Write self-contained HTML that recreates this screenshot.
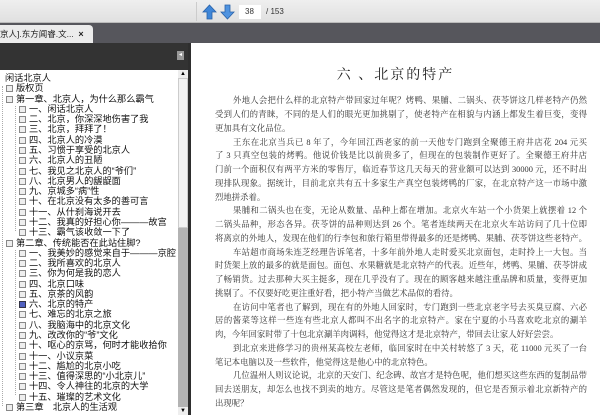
<!DOCTYPE html>
<html><head><meta charset="utf-8"><style>
*{margin:0;padding:0;box-sizing:border-box}
body{width:600px;height:415px;overflow:hidden;background:#fff;font-family:"Liberation Sans","Noto Sans CJK SC",sans-serif;position:relative}
#tb{position:absolute;left:0;top:0;width:600px;height:23px;background:linear-gradient(#efefef,#e0e0e0);border-bottom:1px solid #bbb}
#tabbar{position:absolute;left:0;top:23px;width:600px;height:20px;background:#56565c}
#tab{position:absolute;left:0;top:25px;width:93px;height:18px;background:#ececec;font-size:8.5px;color:#222;padding:3px 0 0 0;white-space:nowrap;overflow:hidden;border-top-right-radius:4px}
#lhead{position:absolute;left:0;top:43px;width:191px;height:27px;background:#333}
#tree{position:absolute;left:0;top:70px;width:178px;height:345px;background:#fff;font-size:9.2px;color:#111;line-height:10.28px;overflow:hidden}
.r{position:absolute;white-space:nowrap}
.b{display:inline-block;width:7px;height:7px;border:1px solid #888;background:#eee;vertical-align:-1px;margin-right:3px}
.v{position:absolute;border-left:1px dotted #aaa;width:0}
#sb{position:absolute;left:178px;top:70px;width:10px;height:345px;background:#b3b3b3}
#thumb{position:absolute;left:178px;top:78px;width:10px;height:150px;background:#f2f2f2;border:1px solid #ccc}
#bd{position:absolute;left:188px;top:43px;width:3px;height:372px;background:#2e2e2e}
#page{position:absolute;left:191px;top:43px;width:409px;height:372px;background:#fff}
h1{position:absolute;left:191px;top:64px;width:409px;text-align:center;font-size:14px;font-weight:normal;letter-spacing:2px;color:#222;font-family:"Liberation Serif","Noto Serif CJK SC",serif}
.l{position:absolute;left:215px;width:372px;font-size:8.4px;line-height:10px;color:#333;white-space:nowrap;text-align:justify;text-align-last:justify;font-family:"Liberation Serif","Noto Serif CJK SC",serif}
.e{text-align-last:left}
.i{left:233px;width:354px}
</style></head><body>
<div id="tb">
<div style="position:absolute;left:196px;top:2px;width:1px;height:19px;background:#ccc"></div>
<svg style="position:absolute;left:202px;top:4px" width="15" height="16" viewBox="0 0 15 16"><path d="M7.5 1L14 8H10V15H5V8H1Z" fill="#3f86d8" stroke="#2a62a8" stroke-width=".8"/></svg>
<svg style="position:absolute;left:220px;top:4px" width="15" height="16" viewBox="0 0 15 16"><path d="M7.5 15L14 8H10V1H5V8H1Z" fill="#4f93e0" stroke="#2a62a8" stroke-width=".8"/></svg>
<div style="position:absolute;left:239px;top:5px;width:22px;height:14px;background:#fff;font-size:8px;padding:2px 0 0 6px;color:#333">38</div>
<div style="position:absolute;left:266px;top:7px;font-size:8px;color:#333">/ 153</div>
</div>
<div id="tabbar"></div>
<div id="tab">京人].东方闻睿.文... &nbsp;<b style="font-size:9px">×</b></div>
<div id="lhead"><div style="position:absolute;left:177px;top:8px;width:7px;height:9px;background:#999;font-size:6px;color:#fff;text-align:center;line-height:9px">◂</div></div>
<div id="tree">
<div class="v" style="left:2px;top:16px;height:320px"></div>
<div class="v" style="left:15px;top:36px;height:125px"></div>
<div class="v" style="left:15px;top:180px;height:145px"></div>
<div class="r" style="left:5px;top:3px">闲话北京人</div>
<div class="r" style="left:6px;top:13.3px"><span class="b"></span>版权页</div>
<div class="r" style="left:6px;top:23.6px"><span class="b"></span>第一章、北京人，为什么那么霸气</div>
<div class="r" style="left:19px;top:33.8px"><span class="b"></span>一、闲话北京人</div>
<div class="r" style="left:19px;top:44.1px"><span class="b"></span>二、北京，你深深地伤害了我</div>
<div class="r" style="left:19px;top:54.4px"><span class="b"></span>三、北京，拜拜了！</div>
<div class="r" style="left:19px;top:64.7px"><span class="b"></span>四、北京人的冷漠</div>
<div class="r" style="left:19px;top:75px"><span class="b"></span>五、习惯于享受的北京人</div>
<div class="r" style="left:19px;top:85.2px"><span class="b"></span>六、北京人的丑陋</div>
<div class="r" style="left:19px;top:95.5px"><span class="b"></span>七、我见之北京人的“爷们”</div>
<div class="r" style="left:19px;top:105.8px"><span class="b"></span>八、北京男人的龌龊面</div>
<div class="r" style="left:19px;top:116.1px"><span class="b"></span>九、京城多“病”性</div>
<div class="r" style="left:19px;top:126.4px"><span class="b"></span>十、在北京没有太多的善可言</div>
<div class="r" style="left:19px;top:136.6px"><span class="b"></span>十一、从什刹海说开去</div>
<div class="r" style="left:19px;top:146.9px"><span class="b"></span>十二、我真的好担心你———故宫</div>
<div class="r" style="left:19px;top:157.2px"><span class="b"></span>十三、霸气该收敛一下了</div>
<div class="r" style="left:6px;top:167.5px"><span class="b"></span>第二章、传统能否在此站住脚?</div>
<div class="r" style="left:19px;top:177.8px"><span class="b"></span>一、我美妙的感觉来自于———京腔</div>
<div class="r" style="left:19px;top:188px"><span class="b"></span>二、我所喜欢的北京人</div>
<div class="r" style="left:19px;top:198.3px"><span class="b"></span>三、你为何是我的恋人</div>
<div class="r" style="left:19px;top:208.6px"><span class="b"></span>四、北京口味</div>
<div class="r" style="left:19px;top:218.9px"><span class="b"></span>五、京茶的风韵</div>
<div class="r" style="left:19px;top:229.2px"><span class="b" style="background:#5060c0;border-color:#334"></span>六、北京的特产</div>
<div class="r" style="left:19px;top:239.4px"><span class="b"></span>七、难忘的北京之旅</div>
<div class="r" style="left:19px;top:249.7px"><span class="b"></span>八、我脑海中的北京文化</div>
<div class="r" style="left:19px;top:260px"><span class="b"></span>九、改改你的“爷”文化</div>
<div class="r" style="left:19px;top:270.3px"><span class="b"></span>十、呕心的京骂，何时才能收拾你</div>
<div class="r" style="left:19px;top:280.6px"><span class="b"></span>十一、小议京菜</div>
<div class="r" style="left:19px;top:290.8px"><span class="b"></span>十二、尴尬的北京小吃</div>
<div class="r" style="left:19px;top:301.1px"><span class="b"></span>十三、值得深思的“小北京儿”</div>
<div class="r" style="left:19px;top:311.4px"><span class="b"></span>十四、令人神往的北京的大学</div>
<div class="r" style="left:19px;top:321.7px"><span class="b"></span>十五、璀璨的艺术文化</div>
<div class="r" style="left:6px;top:332px"><span class="b"></span>第三章　北京人的生活观</div>
</div>
<div id="sb"></div><div id="thumb"></div>
<div style="position:absolute;left:178px;top:70px;width:10px;height:8px;background:#eee;font-size:6px;text-align:center;line-height:8px">▲</div>
<div style="position:absolute;left:178px;top:407px;width:10px;height:8px;background:#eee;font-size:6px;text-align:center;line-height:8px">▼</div>
<div id="bd"></div>
<div id="page"></div>
<h1>六 、北京的特产</h1>
<div class="l i" style="top:96px">外地人会把什么样的北京特产带回家过年呢？烤鸭、果脯、二锅头、茯苓饼这几样老特产仍然</div>
<div class="l" style="top:110px">受到人们的青睐，不同的是人们的眼光更加挑剔了，使老特产在相貌与内涵上都发生着巨变，变得</div>
<div class="l e" style="top:124px">更加具有文化品位。</div>
<div class="l i" style="top:137.5px">王东在北京当兵已 8 年了，今年回江西老家的前一天他专门跑到全聚德王府井店花 204 元买</div>
<div class="l" style="top:151px">了 3 只真空包装的烤鸭。他说价钱是比以前贵多了，但现在的包装制作更好了。全聚德王府井店</div>
<div class="l" style="top:165px">门前一个面积仅有两平方米的零售厅，临近春节这几天每天的营业额可以达到 30000 元，还不时出</div>
<div class="l" style="top:179px">现排队现象。据统计，目前北京共有五十多家生产真空包装烤鸭的厂家，在北京特产这一市场中激</div>
<div class="l e" style="top:192.5px">烈地拼杀着。</div>
<div class="l i" style="top:206px">果脯和二锅头也在变，无论从数量、品种上都在增加。北京火车站一个小货架上就摆着 12 个</div>
<div class="l" style="top:220px">二锅头品种，形态各异。茯苓饼的品种则达到 26 个。笔者连续两天在北京火车站访问了几十位即</div>
<div class="l" style="top:234px">将离京的外地人，发现在他们的行李包和旅行箱里带得最多的还是烤鸭、果脯、茯苓饼这些老特产。</div>
<div class="l i" style="top:247.5px">车站超市商场朱连芝经理告诉笔者，十多年前外地人走时爱买北京面包，走时拎上一大包。当</div>
<div class="l" style="top:261px">时货架上放的最多的就是面包。面包、水果糖就是北京特产的代表。近些年，烤鸭、果脯、茯苓饼成</div>
<div class="l" style="top:275px">了畅销货。过去那种大买主挺多，现在几乎没有了。现在的顾客越来越注重品牌和质量，变得更加</div>
<div class="l e" style="top:289px">挑剔了。不仅要好吃更注重好看，把小特产当做艺术品似的看待。</div>
<div class="l i" style="top:302.5px">在访问中笔者也了解到，现在有的外地人回家时，专门跑到一些北京老字号去买臭豆腐、六必</div>
<div class="l" style="top:316px">居的酱菜等这样一些连有些北京人都叫不出名字的北京特产。家在宁夏的小马喜欢吃北京的涮羊</div>
<div class="l e" style="top:330px">肉，今年回家时带了十包北京涮羊肉调料，他觉得这才是北京特产，带回去让家人好好尝尝。</div>
<div class="l i" style="top:344px">到北京来进修学习的贵州某高校左老师，临回家时在中关村转悠了 3 天，花 11000 元买了一台</div>
<div class="l e" style="top:357.5px">笔记本电脑以及一些软件，他觉得这是他心中的北京特色。</div>
<div class="l i" style="top:371px">几位温州人则议论说，北京的天安门、纪念碑、故宫才是特色呢，他们想买这些东西的复制品带</div>
<div class="l" style="top:385px">回去送朋友，却怎么也找不到卖的地方。尽管这是笔者偶然发现的，但它是否预示着北京新特产的</div>
<div class="l e" style="top:399px">出现呢？</div>
</body></html>
